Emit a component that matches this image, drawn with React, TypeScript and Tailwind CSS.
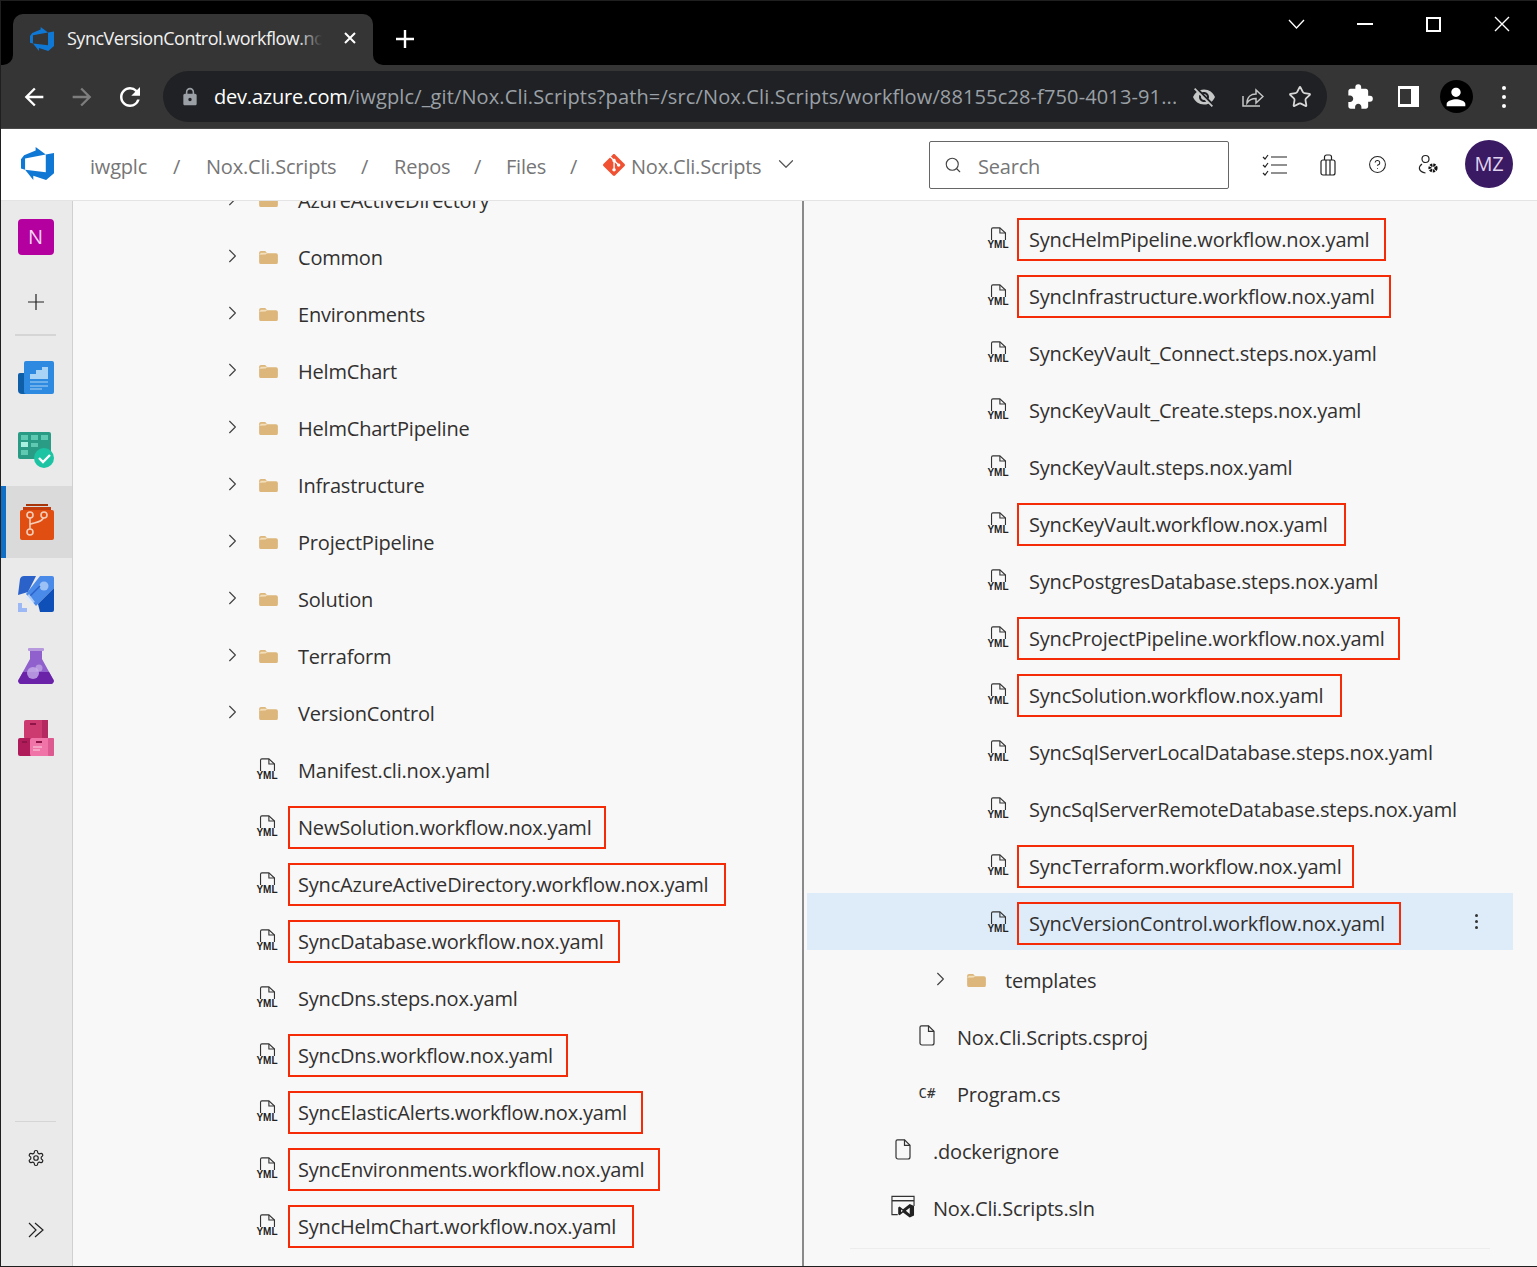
import { ChevronDown, ChevronRight, CircleHelp, Search, Star } from "lucide-react";
import { MdArrowBack, MdArrowForward, MdExtension, MdLock, MdPerson, MdRefresh, MdVisibilityOff } from "react-icons/md";
import { SiGit } from "react-icons/si";

const AZURE_PATH = "M0 8.877L2.247 5.91l8.405-3.416V.022l7.37 5.393L2.966 8.338v8.225L0 15.707zm24-4.45v14.651l-5.753 4.9-9.303-3.057v3.056l-5.978-7.416 15.057 1.798V5.415z";

type Kind = "folder" | "yml" | "file" | "cs" | "sln";
type Item = { name: string; kind: Kind; box?: string };

const leftItems: Item[] = [
    { name: "AzureActiveDirectory", kind: "folder" },
    { name: "Common", kind: "folder" },
    { name: "Environments", kind: "folder" },
    { name: "HelmChart", kind: "folder" },
    { name: "HelmChartPipeline", kind: "folder" },
    { name: "Infrastructure", kind: "folder" },
    { name: "ProjectPipeline", kind: "folder" },
    { name: "Solution", kind: "folder" },
    { name: "Terraform", kind: "folder" },
    { name: "VersionControl", kind: "folder" },
    { name: "Manifest.cli.nox.yaml", kind: "yml" },
    { name: "NewSolution.workflow.nox.yaml", kind: "yml", box: "w-[318px]" },
    { name: "SyncAzureActiveDirectory.workflow.nox.yaml", kind: "yml", box: "w-[438px]" },
    { name: "SyncDatabase.workflow.nox.yaml", kind: "yml", box: "w-[332px]" },
    { name: "SyncDns.steps.nox.yaml", kind: "yml" },
    { name: "SyncDns.workflow.nox.yaml", kind: "yml", box: "w-[280px]" },
    { name: "SyncElasticAlerts.workflow.nox.yaml", kind: "yml", box: "w-[355px]" },
    { name: "SyncEnvironments.workflow.nox.yaml", kind: "yml", box: "w-[372px]" },
    { name: "SyncHelmChart.workflow.nox.yaml", kind: "yml", box: "w-[346px]" },
];

const rightItems: Item[] = [
    { name: "SyncHelmPipeline.workflow.nox.yaml", kind: "yml", box: "w-[369px]" },
    { name: "SyncInfrastructure.workflow.nox.yaml", kind: "yml", box: "w-[374px]" },
    { name: "SyncKeyVault_Connect.steps.nox.yaml", kind: "yml" },
    { name: "SyncKeyVault_Create.steps.nox.yaml", kind: "yml" },
    { name: "SyncKeyVault.steps.nox.yaml", kind: "yml" },
    { name: "SyncKeyVault.workflow.nox.yaml", kind: "yml", box: "w-[329px]" },
    { name: "SyncPostgresDatabase.steps.nox.yaml", kind: "yml" },
    { name: "SyncProjectPipeline.workflow.nox.yaml", kind: "yml", box: "w-[383px]" },
    { name: "SyncSolution.workflow.nox.yaml", kind: "yml", box: "w-[325px]" },
    { name: "SyncSqlServerLocalDatabase.steps.nox.yaml", kind: "yml" },
    { name: "SyncSqlServerRemoteDatabase.steps.nox.yaml", kind: "yml" },
    { name: "SyncTerraform.workflow.nox.yaml", kind: "yml", box: "w-[337px]" },
];

function YmlIcon() {
    return (
        <div className="flex flex-col items-center h-[22px] w-6">
            <svg width="17" height="14" viewBox="0 0 17 14" fill="none" stroke="#333" strokeWidth="1.2">
                <path d="M1 14V2.5A1.5 1.5 0 0 1 2.5 1H10l6 5.5V14" />
                <path d="M10 1v5.5h6" />
            </svg>
            <span className="text-[10px] leading-[9px] font-bold tracking-normal text-[#222] font-['Liberation_Sans',sans-serif]">YML</span>
        </div>
    );
}

function FolderIcon() {
    return (
        <svg width="19" height="15" viewBox="0 0 20 16" className="mt-[3px] ml-[2px]">
            <path d="M0 3a2 2 0 0 1 2-2h4.5l2 2.5H18a2 2 0 0 1 2 2V13a2 2 0 0 1-2 2H2a2 2 0 0 1-2-2z" fill="#dcb67a" />
            <path d="M0 5l7-.2L9.2 3H2z" fill="#f3dfbb" />
        </svg>
    );
}

function FileIcon() {
    return (
        <svg width="16" height="21" viewBox="0 0 16 21" fill="none" stroke="#333" strokeWidth="1.2">
            <path d="M2.5.8h7l5.5 5.5V18a2 2 0 0 1-2 2H3a2 2 0 0 1-2-2V2.3A1.5 1.5 0 0 1 2.5.8z" />
            <path d="M9.5.8v5.5H15" />
        </svg>
    );
}

function SlnIcon() {
    return (
        <svg width="25" height="23" viewBox="0 0 25 23" fill="none">
            <path d="M7 20H1V1h23v10" stroke="#333" strokeWidth="1.2" />
            <path d="M1 5.5h23" stroke="#333" strokeWidth="1.5" />
            <path d="M9 11.500l3.500 2.800L19.500 9l4.500 2v10l-4.500 2-7-5.300L9 20.500l-1.500-1v-7zm1.500 3v3l1.800-1.500zm9-1.800L15.500 16l4 3.300z" fill="#222" />
        </svg>
    );
}

function KindIcon({ kind }: { kind: Kind }) {
    if (kind === "folder") return <FolderIcon />;
    if (kind === "yml") return <YmlIcon />;
    if (kind === "file") return <FileIcon />;
    if (kind === "sln") return <SlnIcon />;
    return <span className="font-['DejaVu_Sans_Mono',monospace] text-[14px] tracking-normal text-[#333] leading-none">C#</span>;
}

function Row({ item, pad, gap = "ml-[9px] pl-2", selected }: { item: Item; pad: string; gap?: string; selected?: boolean }) {
    return (
        <div className={`h-[57px] flex items-start pt-[9px] shrink-0 ${pad} ${selected ? "bg-[#deecf9]" : ""}`}>
            <div className="w-6 h-[43px] mr-[11px] flex items-center justify-center">
                {item.kind === "folder" && <ChevronRight size={28} strokeWidth={1.2} className="text-[#444] -mt-[3px] ml-[1px]" />}
            </div>
            <div className="w-6 h-[43px] flex items-center justify-center -mt-[2px]">
                <KindIcon kind={item.kind} />
            </div>
            <div
                className={`h-[43px] flex items-center border-2 whitespace-nowrap text-[#323130] ${gap} ${item.box ? `${item.box} border-[#f52a06]` : "border-transparent"}`}
            >
                {item.name}
            </div>
            {selected && (
                <div className="ml-auto mr-[35px] h-[43px] -mt-[2px] flex flex-col items-center justify-center gap-[3px]">
                    <span className="w-[3px] h-[3px] rounded-full bg-[#333]" />
                    <span className="w-[3px] h-[3px] rounded-full bg-[#333]" />
                    <span className="w-[3px] h-[3px] rounded-full bg-[#333]" />
                </div>
            )}
        </div>
    );
}

function Crumb({ text, width }: { text: string; width: string }) {
    return <div className={`${width} text-[#767676] whitespace-nowrap shrink-0`}>{text}</div>;
}

function TitleBar() {
    return (
        <div className="h-[64px] bg-black flex items-end shrink-0 relative">
            <div className="ml-[12px] w-[360px] h-[51px] bg-[#353535] rounded-t-[10px] flex items-center pl-[17px] relative">
                <div className="absolute -left-[10px] bottom-0 w-[10px] h-[10px] bg-[#353535]">
                    <div className="w-full h-full bg-black rounded-br-[10px]" />
                </div>
                <div className="absolute -right-[10px] bottom-0 w-[10px] h-[10px] bg-[#353535]">
                    <div className="w-full h-full bg-black rounded-bl-[10px]" />
                </div>
                <svg width="24" height="24" viewBox="0 0 24 24" className="shrink-0 -mt-[2px]"><path d={AZURE_PATH} fill="#0f78d4" /></svg>
                <div className="ml-[13px] w-[255px] overflow-hidden whitespace-nowrap text-[18px] tracking-[-0.5px] text-[#f1f1f1] relative -mt-[3px]">
                    SyncVersionControl.workflow.nox.yaml
                    <div className="absolute right-0 top-0 bottom-0 w-[24px] bg-gradient-to-r from-transparent to-[#353535]" />
                </div>
                <svg width="14" height="14" viewBox="0 0 14 14" className="ml-[21px] -mt-[3px]" stroke="#fff" strokeWidth="2"><path d="M2 2l10 10M12 2L2 12" /></svg>
            </div>
            <svg width="20" height="20" viewBox="0 0 20 20" className="ml-[22px] mb-[16px]" stroke="#fff" strokeWidth="2.4"><path d="M10 1v18M1 10h18" /></svg>
            <div className="ml-auto self-start flex items-center h-[46px]">
                <svg width="18" height="10" viewBox="0 0 18 10" className="mr-[51px]" fill="none" stroke="#fff" strokeWidth="1.3"><path d="M1 1l7.500 8L16 1" /></svg>
                <div className="w-[16px] h-[2px] bg-white mr-[53px]" />
                <div className="w-[15px] h-[15px] border-2 border-white mr-[53px]" />
                <svg width="16" height="16" viewBox="0 0 16 16" className="mr-[27px]" stroke="#fff" strokeWidth="1.4"><path d="M1 1l14 14M15 1L1 15" /></svg>
            </div>
        </div>
    );
}

function Toolbar() {
    return (
        <div className="h-[64px] bg-[#353535] border-b border-b-[#4a4a4a] flex items-center shrink-0 pl-[9px]">
            <div className="w-12 flex justify-center"><MdArrowBack size={28} className="text-white" /></div>
            <div className="w-12 flex justify-center"><MdArrowForward size={28} className="text-[#7d7d7d]" /></div>
            <div className="w-12 flex justify-center"><MdRefresh size={30} className="text-white" /></div>
            <div className="ml-[9px] w-[1164px] h-[51px] rounded-full bg-[#202124] flex items-center pl-[17px]">
                <MdLock size={20} className="text-[#9aa0a6] shrink-0" />
                <div className="ml-[14px] w-[962px] text-[20px] whitespace-nowrap overflow-hidden text-[#9aa0a6] tracking-[0.13px]">
                    <span className="text-white tracking-[-0.2px]">dev.azure.com</span>/iwgplc/_git/Nox.Cli.Scripts?path=/src/Nox.Cli.Scripts/workflow/88155c28-f750-4013-91...
                </div>
                <MdVisibilityOff size={24} className="text-[#c4c7c5] ml-[16px] shrink-0" />
                <svg width="24" height="24" viewBox="0 0 24 24" className="ml-[24px] shrink-0" fill="none" stroke="#c4c7c5" strokeWidth="1.5">
                    <path d="M3 11v10h17" />
                    <path d="M7 18c0-6 4-9 9-9V5l7 6.500-7 6.500v-4.500c-4 0-7 1.500-9 4.500z" />
                </svg>
                <Star size={24} strokeWidth={1.8} className="text-[#d8d8d8] ml-[24px] shrink-0" />
            </div>
            <div className="ml-[9px] w-12 flex justify-center"><MdExtension size={28} className="text-white" /></div>
            <div className="w-12 flex justify-center">
                <div className="w-[21px] h-[21px] bg-white pl-[2px] py-[3px]"><div className="w-[11px] h-full bg-[#353535]" /></div>
            </div>
            <div className="w-12 flex justify-center">
                <div className="w-[33px] h-[33px] rounded-full bg-black flex items-center justify-center"><MdPerson size={28} className="text-white" /></div>
            </div>
            <div className="w-12 flex flex-col items-center gap-[5px]">
                <span className="w-1 h-1 rounded-full bg-white" />
                <span className="w-1 h-1 rounded-full bg-white" />
                <span className="w-1 h-1 rounded-full bg-white" />
            </div>
        </div>
    );
}

function Header() {
    return (
        <div className="h-[72px] bg-white border-b border-b-[#e4e4e4] flex items-center shrink-0 pl-[20px] text-[20px] z-10">
            <svg width="33" height="33" viewBox="0 0 24 24" className="shrink-0 -mt-[2px]"><path d={AZURE_PATH} fill="#0f78d4" /></svg>
            <div className="ml-[36px] flex items-center mt-[5px]">
                <Crumb text="iwgplc" width="w-[83px]" />
                <Crumb text="/" width="w-[33px]" />
                <Crumb text="Nox.Cli.Scripts" width="w-[155px]" />
                <Crumb text="/" width="w-[33px]" />
                <Crumb text="Repos" width="w-[80px]" />
                <Crumb text="/" width="w-[32px]" />
                <Crumb text="Files" width="w-[64px]" />
                <Crumb text="/" width="w-[33px]" />
                <SiGit size={22} className="text-[#f05133] shrink-0 -mt-[5px]" />
                <div className="ml-[6px] w-[144px] text-[#767676] whitespace-nowrap">Nox.Cli.Scripts</div>
                <ChevronDown size={26} strokeWidth={1.1} className="text-[#555] -mt-[7px] -ml-[2px]" />
            </div>
            <div className="ml-[130px] w-[300px] h-[48px] border border-[#666] rounded-[2px] flex items-center pl-[14px] text-[#767676] mt-[1px] shrink-0">
                <Search size={18} strokeWidth={1.5} className="text-[#444]" />
                <span className="ml-[16px] mt-[4px]">Search</span>
            </div>
            <div className="ml-[33px] w-[26px] shrink-0">
                <svg width="26" height="22" viewBox="0 0 26 22" fill="none" stroke="#222" strokeWidth="1.2">
                    <path d="M9 3h16M9 11h16M9 19h16" />
                    <path d="M1 3l2 2 3-4M1 11l2 2 3-4M1 19l2 2 3-4" />
                </svg>
            </div>
            <div className="ml-[23px] w-[34px] flex justify-center shrink-0">
                <svg width="16" height="22" viewBox="0 0 16 22" fill="none" stroke="#222" strokeWidth="1.2">
                    <rect x="1" y="6" width="14" height="15" rx="2" />
                    <path d="M4.500 6V3a2 2 0 0 1 2-2h3a2 2 0 0 1 2 2v3M6 6v15M10 6v15" />
                </svg>
            </div>
            <div className="ml-[23px] w-[18px] shrink-0"><CircleHelp size={19} strokeWidth={1.3} className="text-[#222]" /></div>
            <div className="ml-[32px] w-[22px] shrink-0">
                <svg width="22" height="22" viewBox="0 0 22 22" fill="none" stroke="#222" strokeWidth="1.2">
                    <circle cx="7.500" cy="5" r="3.500" />
                    <path d="M4 10c-2 1.500-3 3-2.500 5s3 3.500 6 4" />
                    <circle cx="15" cy="14" r="3" stroke="#111" strokeWidth="3.200" strokeDasharray="2 0.800" />
                </svg>
            </div>
            <div className="ml-[25px] w-12 h-12 rounded-full bg-[#3a1a63] text-[#e0d4ee] flex items-center justify-center shrink-0 -mt-[2px]">MZ</div>
        </div>
    );
}

function Sidebar() {
    return (
        <div className="w-[72px] shrink-0 bg-[#eaeaea] border-r border-r-[#d0d0d0] flex flex-col items-center pt-[18px] pb-[28px] pr-[2px]">
            <div className="w-9 h-9 rounded-[4px] bg-[#b4009e] text-[#f6d6f0] flex items-center justify-center text-[20px]">N</div>
            <svg width="16" height="16" viewBox="0 0 16 16" className="mt-[39px]" stroke="#222" strokeWidth="1.2"><path d="M8 0v16M0 8h16" /></svg>
            <div className="w-[41px] h-[2px] bg-[#d5d5d5] mt-[24px]" />

            <svg width="36" height="34" viewBox="0 0 36 34" className="mt-[25px]">
                <path d="M0 14a2 2 0 0 1 2-2h12v21H4a4 4 0 0 1-4-4z" fill="#0e5ea8" />
                <path d="M6 2a2 2 0 0 1 2-2h26a2 2 0 0 1 2 2v29a2 2 0 0 1-2 2H8a2 2 0 0 1-2-2z" fill="#2e8ae0" />
                <path d="M12 18v-5h6V9h6V6h6v12z" fill="#a9d4f5" />
                <path d="M12 21h18M12 25h18M12 28h12" stroke="#a9d4f5" strokeWidth="1.200" />
            </svg>

            <svg width="36" height="36" viewBox="0 0 36 36" className="mt-[37px]">
                <rect x="0" y="0" width="33" height="27" rx="2" fill="#2a9c86" />
                <path d="M3 3h7v5H3zM13 3h7v5h-7zM23 3h7v5h-7zM13 11h7v4h-7zM3 18h7v5H3z" fill="#5fc9b2" />
                <rect x="3" y="10" width="7" height="5" fill="#a8f0df" />
                <circle cx="26" cy="26" r="10" fill="#1cc4a3" />
                <path d="M21 26l4 4 7-7" stroke="#fff" strokeWidth="2.400" fill="none" />
            </svg>

            <div className="self-start w-[71px] h-[72px] mt-[18px] bg-[#dadada] border-l-[5px] border-l-[#0f6fc6] flex items-center justify-center pr-[5px]">
                <svg width="34" height="36" viewBox="0 0 34 36">
                    <path d="M6 0h22v2H6z" fill="#a8340a" />
                    <path d="M3 3h28v4H3z" fill="#c23c0c" />
                    <rect x="0" y="6" width="34" height="30" rx="2" fill="#e04e12" />
                    <path d="M10 11v16M10 21c0-3 14-1 14-10" stroke="#f6cdb8" strokeWidth="1.600" fill="none" />
                    <circle cx="10" cy="11" r="3" fill="#e04e12" stroke="#f6cdb8" strokeWidth="1.600" />
                    <circle cx="24" cy="11" r="3" fill="#e04e12" stroke="#f6cdb8" strokeWidth="1.600" />
                    <circle cx="10" cy="28" r="3" fill="#e04e12" stroke="#f6cdb8" strokeWidth="1.600" />
                </svg>
            </div>

            <svg width="36" height="36" viewBox="0 0 36 36" className="mt-[18px]">
                <path d="M18 0H6Q3 0 2 3L0 19l10-3z" fill="#2a62c9" />
                <path d="M34 0H22L8 18l10 12L36 12V2a2 2 0 0 0-2-2z" fill="#4a8ae8" />
                <path d="M36 12L20 28l2 8h12a2 2 0 0 0 2-2z" fill="#0f4fb8" />
                <circle cx="26" cy="10" r="4.500" fill="#9cc2f5" />
                <path d="M12 20L22 10" stroke="#2a62c9" strokeWidth="1.400" />
                <path d="M0 36V27h4v5h5v4z" fill="#9cb9f5" />
                <path d="M7 22l4-4 6 8-4 2z" fill="#dbe8fb" opacity="0.700" />
            </svg>

            <svg width="36" height="36" viewBox="0 0 36 36" className="mt-[36px]">
                <rect x="10" y="0" width="16" height="3" rx="1" fill="#b79ade" />
                <path d="M12 3h12v8l11 20a3 3 0 0 1-2.500 5h-29A3 3 0 0 1 1 31l11-20z" fill="#9060cc" />
                <path d="M5 24h26l4 7a3 3 0 0 1-2.500 5h-29A3 3 0 0 1 1 31z" fill="#6a22a8" />
                <circle cx="15" cy="25" r="6" fill="#c7aee8" opacity="0.800" />
                <circle cx="21" cy="20" r="3.500" fill="#c7aee8" opacity="0.700" />
            </svg>

            <svg width="36" height="36" viewBox="0 0 36 36" className="mt-[36px]">
                <rect x="6" y="0" width="24" height="19" rx="2" fill="#cc3a70" />
                <rect x="24" y="0" width="6" height="19" fill="#b42a60" />
                <rect x="0" y="18" width="14" height="18" rx="2" fill="#b01c5a" />
                <rect x="12" y="18" width="24" height="18" rx="2" fill="#f074a8" />
                <rect x="30" y="18" width="6" height="18" rx="1" fill="#dd5a90" />
                <path d="M12 3h6v2h-6zM18 21h6v2h-6zM9 21h-5v2h5z" fill="#8f1448" />
                <path d="M15 27h9M15 30h7" stroke="#fbd3e2" strokeWidth="1" />
            </svg>

            <div className="mt-auto w-[41px] h-px bg-[#d5d5d5]" />
            <svg width="18" height="18" viewBox="0 0 24 24" className="mt-[27px]" fill="none" stroke="#222" strokeWidth="1.600">
                <path d="M12.220 2h-.44a2 2 0 0 0-2 2v.18a2 2 0 0 1-1 1.730l-.43.25a2 2 0 0 1-2 0l-.15-.08a2 2 0 0 0-2.730.730l-.22.380a2 2 0 0 0 .730 2.730l.15.100a2 2 0 0 1 1 1.720v.510a2 2 0 0 1-1 1.740l-.15.090a2 2 0 0 0-.730 2.730l.22.380a2 2 0 0 0 2.730.730l.15-.08a2 2 0 0 1 2 0l.43.25a2 2 0 0 1 1 1.730V20a2 2 0 0 0 2 2h.44a2 2 0 0 0 2-2v-.18a2 2 0 0 1 1-1.730l.43-.25a2 2 0 0 1 2 0l.15.080a2 2 0 0 0 2.730-.730l.22-.390a2 2 0 0 0-.730-2.730l-.15-.080a2 2 0 0 1-1-1.740v-.500a2 2 0 0 1 1-1.740l.15-.090a2 2 0 0 0 .730-2.730l-.22-.380a2 2 0 0 0-2.730-.730l-.15.080a2 2 0 0 1-2 0l-.43-.25a2 2 0 0 1-1-1.730V4a2 2 0 0 0-2-2z" />
                <circle cx="12" cy="12" r="3" />
            </svg>
            <svg width="16" height="16" viewBox="0 0 16 16" className="mt-[55px]" fill="none" stroke="#222" strokeWidth="1.200"><path d="M1 1l7 7-7 7M7 1l8 7-8 7" /></svg>
        </div>
    );
}

function App() {
    return (
        <div className="w-[1537px] h-[1267px] overflow-hidden bg-[#1f1f1f] pt-px pl-px pb-px flex flex-col font-['Open_Sans',sans-serif] text-[20px] tracking-[-0.2px]">
            <TitleBar />
            <Toolbar />
            <Header />
            <div className="flex-1 flex min-h-0">
                <Sidebar />
                <div className="w-[729px] bg-[#f8f8f8] overflow-hidden flex flex-col">
                    <div className="-mt-[31px] flex flex-col">
                        {leftItems.map((item) => (
                            <Row key={item.name} item={item} pad="pl-[147px]" />
                        ))}
                    </div>
                </div>
                <div className="w-[2px] bg-[#8a8a8a] shrink-0" />
                <div className="flex-1 bg-[#f8f8f8] overflow-hidden pl-[3px] pr-[24px] pt-2 flex flex-col">
                    {rightItems.map((item) => (
                        <Row key={item.name} item={item} pad="pl-[144px]" gap="ml-[7px] pl-[10px]" />
                    ))}
                    <Row item={{ name: "SyncVersionControl.workflow.nox.yaml", kind: "yml", box: "w-[384px]" }} pad="pl-[144px]" gap="ml-[7px] pl-[10px]" selected />
                    <Row item={{ name: "templates", kind: "folder" }} pad="pl-[121px]" gap="ml-[8px] pl-2" />
                    <Row item={{ name: "Nox.Cli.Scripts.csproj", kind: "file" }} pad="pl-[73px]" gap="ml-[8px] pl-2" />
                    <Row item={{ name: "Program.cs", kind: "cs" }} pad="pl-[73px]" gap="ml-[8px] pl-2" />
                    <Row item={{ name: ".dockerignore", kind: "file" }} pad="pl-[49px]" gap="ml-[8px] pl-2" />
                    <Row item={{ name: "Nox.Cli.Scripts.sln", kind: "sln" }} pad="pl-[49px]" gap="ml-[8px] pl-2" />
                    <div className="mt-[13px] ml-[43px] mr-[23px] h-px bg-[#ededed] shrink-0" />
                </div>
            </div>
        </div>
    );
}

export default App;
